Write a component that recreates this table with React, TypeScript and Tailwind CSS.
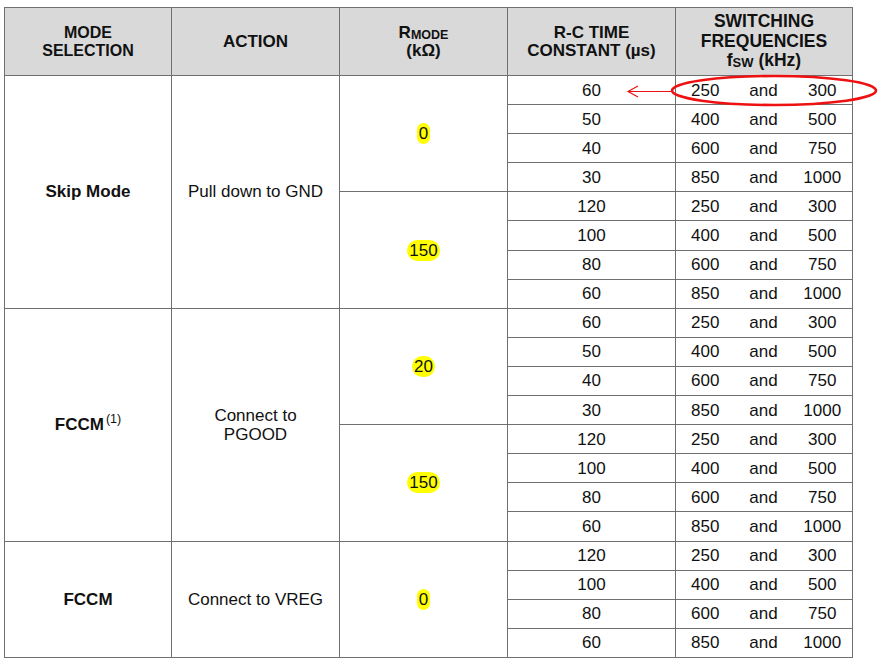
type Block = { r: string; times: string[] };
type Group = { mode: React.ReactNode; action: React.ReactNode; blocks: Block[] };

const freqs = [
  ["250", "300"],
  ["400", "500"],
  ["600", "750"],
  ["850", "1000"],
];

const groups: Group[] = [
  {
    mode: "Skip Mode",
    action: "Pull down to GND",
    blocks: [
      { r: "0", times: ["60", "50", "40", "30"] },
      { r: "150", times: ["120", "100", "80", "60"] },
    ],
  },
  {
    mode: (
      <>
        FCCM<sup className="relative -top-[7px] ml-[2px] text-[12.5px] font-normal">(1)</sup>
      </>
    ),
    action: (
      <>
        Connect to
        <br />
        PGOOD
      </>
    ),
    blocks: [
      { r: "20", times: ["60", "50", "40", "30"] },
      { r: "150", times: ["120", "100", "80", "60"] },
    ],
  },
  {
    mode: "FCCM",
    action: "Connect to VREG",
    blocks: [{ r: "0", times: ["120", "100", "80", "60"] }],
  },
];

const cell = "border border-[#707070] text-center align-middle p-0";

function Highlight({ v }: { v: string }) {
  return <span className="rounded-full bg-[#ffff00] px-[2px] py-[1px]">{v}</span>;
}

export default function App() {
  return (
    <div className="min-h-screen bg-white pl-[4px] pt-[7px] font-['Liberation_Sans',Arial,sans-serif] text-[17px] text-[#111]">
      <div className="relative w-[848px]">
        <table className="w-[848px] table-fixed border-collapse">
          <colgroup>
            <col className="w-[167px]" />
            <col className="w-[168px]" />
            <col className="w-[168px]" />
            <col className="w-[168px]" />
            <col className="w-[59px]" />
            <col className="w-[58px]" />
            <col className="w-[60px]" />
          </colgroup>
          <thead>
            <tr className="h-[68px] bg-[#d9d9d9] text-[17px] font-bold leading-[18px]">
              <th className={`${cell} text-[16px]`}>
                MODE
                <br />
                SELECTION
              </th>
              <th className={cell}>ACTION</th>
              <th className={cell}>
                R<sub className="relative top-[1px] text-[12.5px] leading-none">MODE</sub>
                <br />
                (kΩ)
              </th>
              <th className={cell}>
                R-C TIME
                <br />
                CONSTANT (µs)
              </th>
              <th colSpan={3} className={`${cell} text-[17.5px] leading-[19.5px]`}>
                SWITCHING
                <br />
                FREQUENCIES
                <br />
                f<sub className="relative top-[1px] text-[13px]">SW</sub> (kHz)
              </th>
            </tr>
          </thead>
          <tbody className="leading-[19px]">
            {groups.map((g, gi) => {
              const total = g.blocks.length * 4;
              return g.blocks.map((b, bi) =>
                b.times.map((t, i) => (
                  <tr key={`${gi}-${bi}-${i}`} className="h-[29.1px]">
                    {bi === 0 && i === 0 && (
                      <>
                        <td rowSpan={total} className={`${cell} font-bold`}>
                          {g.mode}
                        </td>
                        <td rowSpan={total} className={cell}>
                          {g.action}
                        </td>
                      </>
                    )}
                    {i === 0 && (
                      <td rowSpan={4} className={cell}>
                        <Highlight v={b.r} />
                      </td>
                    )}
                    <td className={cell}>{t}</td>
                    <td className="border-y border-l border-[#707070] p-0 text-center">{freqs[i][0]}</td>
                    <td className="border-y border-[#707070] p-0 text-center">and</td>
                    <td className="border-y border-r border-[#707070] p-0 text-center">{freqs[i][1]}</td>
                  </tr>
                ))
              );
            })}
          </tbody>
        </table>
        {/* red callout over the first row */}
        <svg
          className="pointer-events-none absolute left-[615px] top-[66px]"
          width="260"
          height="36"
          viewBox="0 0 260 36"
        >
          <ellipse cx="155" cy="17.5" rx="102" ry="14.5" fill="none" stroke="#ee1111" strokeWidth="2.6" />
          <line x1="53" y1="18.5" x2="10" y2="18.5" stroke="#ee1111" strokeWidth="1.2" />
          <polyline points="19,13 9,18.5 19,24" fill="none" stroke="#ee1111" strokeWidth="1.2" />
        </svg>
      </div>
    </div>
  );
}
